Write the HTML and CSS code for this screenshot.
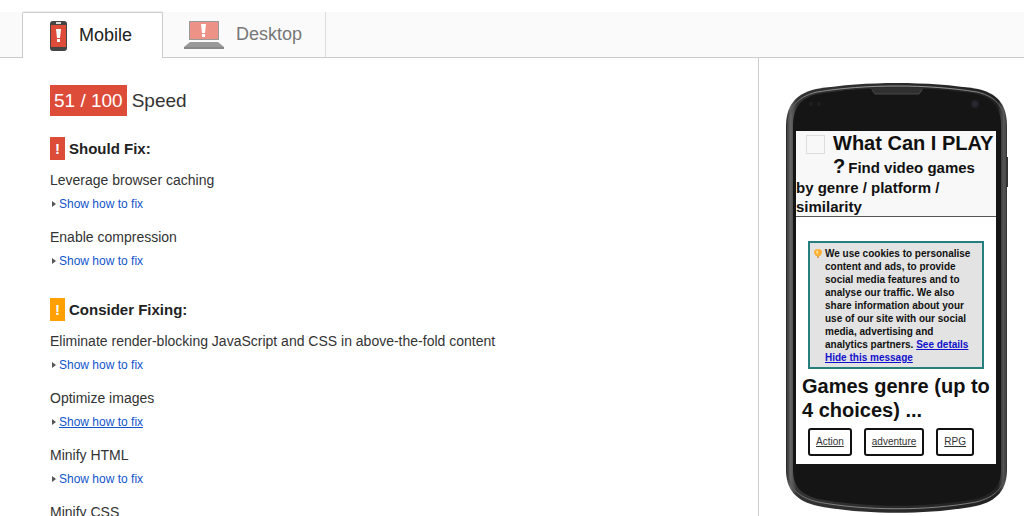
FILE: index.html
```html
<!DOCTYPE html>
<html lang="en">
<head>
  <meta charset="UTF-8">
  <meta name="viewport" content="width=device-width, initial-scale=1">
  <title>PageSpeed Insights</title>
  <link rel="stylesheet" href="styles.css">
</head>
<body>

<div class="tabs" role="tablist">
  <button class="tab active" type="button" role="tab" aria-selected="true">
    <svg class="icon-mobile" width="17" height="30" viewBox="0 0 17 30" aria-hidden="true">
      <rect width="17" height="30" rx="3" fill="#444"/>
      <rect x="1" y="4" width="15" height="22" fill="#dd4b39"/>
      <rect x="6" y="1" width="5" height="2" fill="#ddd"/>
      <path d="M6 8h5l-1 9H7z" fill="#fff"/>
      <rect x="7" y="18" width="3" height="3" fill="#fff"/>
    </svg>
    Mobile
  </button>
  <button class="tab" type="button" role="tab" aria-selected="false">
    <svg class="icon-desktop" width="40" height="28" viewBox="0 0 40 28" aria-hidden="true">
      <rect x="5" width="30" height="19" fill="#999"/>
      <rect x="6" y="1" width="28" height="17" fill="#ec9287"/>
      <path d="M6 21h28l6 5H0z" fill="#999"/>
      <path d="M0 26h40v2H0z" fill="#888"/>
      <path d="M17 3h5l-1 9h-3z" fill="#fff"/>
      <rect x="18" y="13" width="3" height="3" fill="#fff"/>
    </svg>
    Desktop
  </button>
</div>

<div class="content">
  <main class="results">
    <h1 class="score"><span class="score-value">51 / 100</span> Speed</h1>

    <section class="group">
      <h2><span class="badge red">!</span>Should Fix:</h2>
      <div class="rule">
        <h3>Leverage browser caching</h3>
        <a href="#caching">Show how to fix</a>
      </div>
      <div class="rule">
        <h3>Enable compression</h3>
        <a href="#compression">Show how to fix</a>
      </div>
    </section>

    <section class="group">
      <h2><span class="badge orange">!</span>Consider Fixing:</h2>
      <div class="rule">
        <h3>Eliminate render-blocking JavaScript and CSS in above-the-fold content</h3>
        <a href="#blocking">Show how to fix</a>
      </div>
      <div class="rule">
        <h3>Optimize images</h3>
        <a class="hovered" href="#images">Show how to fix</a>
      </div>
      <div class="rule">
        <h3>Minify HTML</h3>
        <a href="#html">Show how to fix</a>
      </div>
      <div class="rule">
        <h3>Minify CSS</h3>
      </div>
    </section>
  </main>

  <aside class="preview">
    <div class="phone">
      <svg class="phone-frame" viewBox="0 0 222 430" preserveAspectRatio="none" aria-hidden="true">
        <defs>
          <linearGradient id="edge" x1="0" x2="1" y1="0" y2="0">
            <stop offset="0" stop-color="#222"/>
            <stop offset="0.02" stop-color="#666"/>
            <stop offset="0.05" stop-color="#333"/>
            <stop offset="0.96" stop-color="#222"/>
            <stop offset="0.985" stop-color="#555"/>
            <stop offset="1" stop-color="#333"/>
          </linearGradient>
          <linearGradient id="rim" x1="0" x2="0" y1="0" y2="1">
            <stop offset="0" stop-color="#999"/>
            <stop offset="0.06" stop-color="#555"/>
            <stop offset="0.92" stop-color="#444"/>
            <stop offset="1" stop-color="#888"/>
          </linearGradient>
        </defs>
        <path d="M0 44C0 24 8 11 30 6C80 -2 142 -2 192 6C214 11 221 24 221 44V386C221 406 212 418 190 423C144 432 78 432 32 423C9 418 0 406 0 386Z" fill="url(#edge)"/>
        <path d="M7 44C7 25 14 15 32 11C80 3 142 3 190 11C208 15 215 25 215 44V386C215 403 207 411 190 416C142 425 80 425 32 416C14 411 7 403 7 386Z" fill="#151515"/>
        <path d="M2 44C2 26 10 14 31 9C80 1 142 1 191 9C212 14 219 26 219 44V386C219 404 210 414 190 419C142 428 80 428 32 419C11 414 2 404 2 386Z" fill="none" stroke="url(#rim)"/>
        <path d="M84 5Q111 3 138 5L133 11H89Z" fill="#303030"/>
        <path d="M86 7L89 11H133L136 7" fill="none" stroke="#484848"/>
        <circle cx="189" cy="21" r="4" fill="#222228"/>
        <circle cx="189" cy="21" r="2" fill="#2a2a38"/>
        <circle cx="25" cy="21" r="2" fill="#202020"/>
        <circle cx="33" cy="21" r="2" fill="#202020"/>
        <path d="M221 74V104" stroke="#333" stroke-width="2"/>
      </svg>
      <div class="screen">
        <div class="site-header">
          <span class="site-logo"></span>
          <span class="site-name">What Can I PLAY ?</span><span>Find video games by genre / platform / similarity</span>
        </div>
        <div class="cookies">
          <svg width="8" height="11" viewBox="0 0 8 11" aria-hidden="true">
            <path d="M0 3Q0 0 4 0T8 3Q8 5 6 7H2Q0 5 0 3Z" fill="#fbb034"/>
            <path d="M2 2Q3 1 4 2V5H3Z" fill="#ffe39a"/>
            <path d="M3 7H5V9H3Z" fill="#d9a45a"/>
          </svg>
          <p>We use cookies to personalise content and ads, to provide social media features and to analyse our traffic. We also share information about your use of our site with our social media, advertising and analytics partners. <a href="#details">See details</a> <a href="#hide">Hide this message</a></p>
        </div>
        <h2 class="genre-title">Games genre (up to 4 choices) ...</h2>
        <div class="genres">
          <a href="#action">Action</a>
          <a href="#adventure">adventure</a>
          <a href="#rpg">RPG</a>
        </div>
      </div>
    </div>
  </aside>
</div>

</body>
</html>
```
FILE: styles.css
```css
* {
  box-sizing: border-box;
}
body {
  font-family: "Liberation Sans", Arial, sans-serif;
  background-color: #fff;
  color: #333;
  margin: 0;
  padding-top: 12px;
  height: 100vh;
  overflow: hidden;
  display: flex;
  flex-direction: column;
}
h1, h2, h3, p {
  margin: 0;
}

/* tabs */
.tabs {
  display: flex;
  flex-shrink: 0;
  height: 46px;
  padding-left: 22px;
  background-color: #fafafa;
  border-bottom: 1px solid #ccc;
}
.tab {
  display: flex;
  align-items: center;
  gap: 12px;
  height: 45px;
  padding: 0 23px 0 21px;
  font: 18px "Liberation Sans", Arial, sans-serif;
  color: #777;
  background: none;
  border: none;
  border-right: 1px solid #ddd;
  cursor: pointer;
}
.tab.active {
  height: 46px;
  padding: 0 30px 0 27px;
  color: #222;
  background-color: #fff;
  border: 1px solid #ccc;
  border-bottom: none;
  border-radius: 2px 2px 0 0;
  box-shadow: 0 -1px 1px #eee;
}

/* results */
.content {
  display: flex;
  flex: 1;
  min-height: 0;
}
.results {
  flex: 1;
  padding: 27px 20px 0 50px;
}
.score {
  display: flex;
  align-items: center;
  gap: 5px;
  margin-bottom: 21px;
  font-size: 19px;
  font-weight: normal;
}
.score-value {
  padding: 0 4px;
  line-height: 31px;
  color: #fff;
  background-color: #dd4b39;
}
.group {
  margin-bottom: 25px;
}
.group h2 {
  display: flex;
  align-items: center;
  gap: 4px;
  margin-bottom: 8px;
  font-size: 15px;
  line-height: 23px;
  color: #222;
}
.badge {
  width: 15px;
  text-align: center;
  color: #fff;
}
.red { background-color: #dd4b39; }
.orange { background-color: #ff9f00; }
.rule {
  margin-bottom: 9px;
}
.rule h3 {
  font-size: 14px;
  font-weight: normal;
  line-height: 24px;
}
.rule a {
  display: flex;
  align-items: center;
  gap: 3px;
  font-size: 12px;
  line-height: 24px;
  color: #15c;
  text-decoration: none;
}
.rule a::before {
  content: "";
  margin-left: 2px;
  border: 3px solid transparent;
  border-left: 4px solid #555;
  border-right: 0;
}
.rule a:hover,
.rule a.hovered {
  text-decoration: underline;
}

/* phone preview */
.preview {
  flex-shrink: 0;
  padding: 25px 16px 0 27px;
  border-left: 1px solid #ccc;
}
.phone {
  position: relative;
  width: 222px;
  padding: 48px 12px 49px 10px;
}
.phone-frame {
  position: absolute;
  top: 0;
  left: 0;
  width: 100%;
  height: 100%;
}
.screen {
  position: relative;
  padding-bottom: 8px;
  color: #111;
  background-color: #fff;
}
.site-header {
  padding-top: 1px;
  font-size: 15px;
  font-weight: bold;
  line-height: 19px;
  background-color: #f8f8f8;
  border-bottom: 1px solid #555;
}
.site-logo {
  float: left;
  width: 19px;
  height: 19px;
  margin: 3px 8px 21px 10px;
  border: 1px solid #ddd;
}
.site-name {
  margin-right: 3px;
  font-size: 20px;
  line-height: 23px;
}
.cookies {
  display: flex;
  align-items: flex-start;
  gap: 3px;
  margin: 24px 12px 5px;
  padding: 4px 8px 3px 4px;
  font-size: 10px;
  font-weight: bold;
  line-height: 13px;
  background-color: #e3e3e3;
  border: 2px solid #267f7f;
}
.cookies svg {
  flex-shrink: 0;
  margin-top: 2px;
}
.cookies a {
  color: #1111cc;
}
.genre-title {
  padding: 0 6px;
  font-size: 20px;
  line-height: 24px;
}
.genres {
  display: flex;
  gap: 12px;
  margin: 6px 12px 0;
}
.genres a {
  padding: 0 6px;
  font-size: 10px;
  line-height: 24px;
  color: #333;
  border: 2px solid #111;
  border-radius: 3px;
}
```
